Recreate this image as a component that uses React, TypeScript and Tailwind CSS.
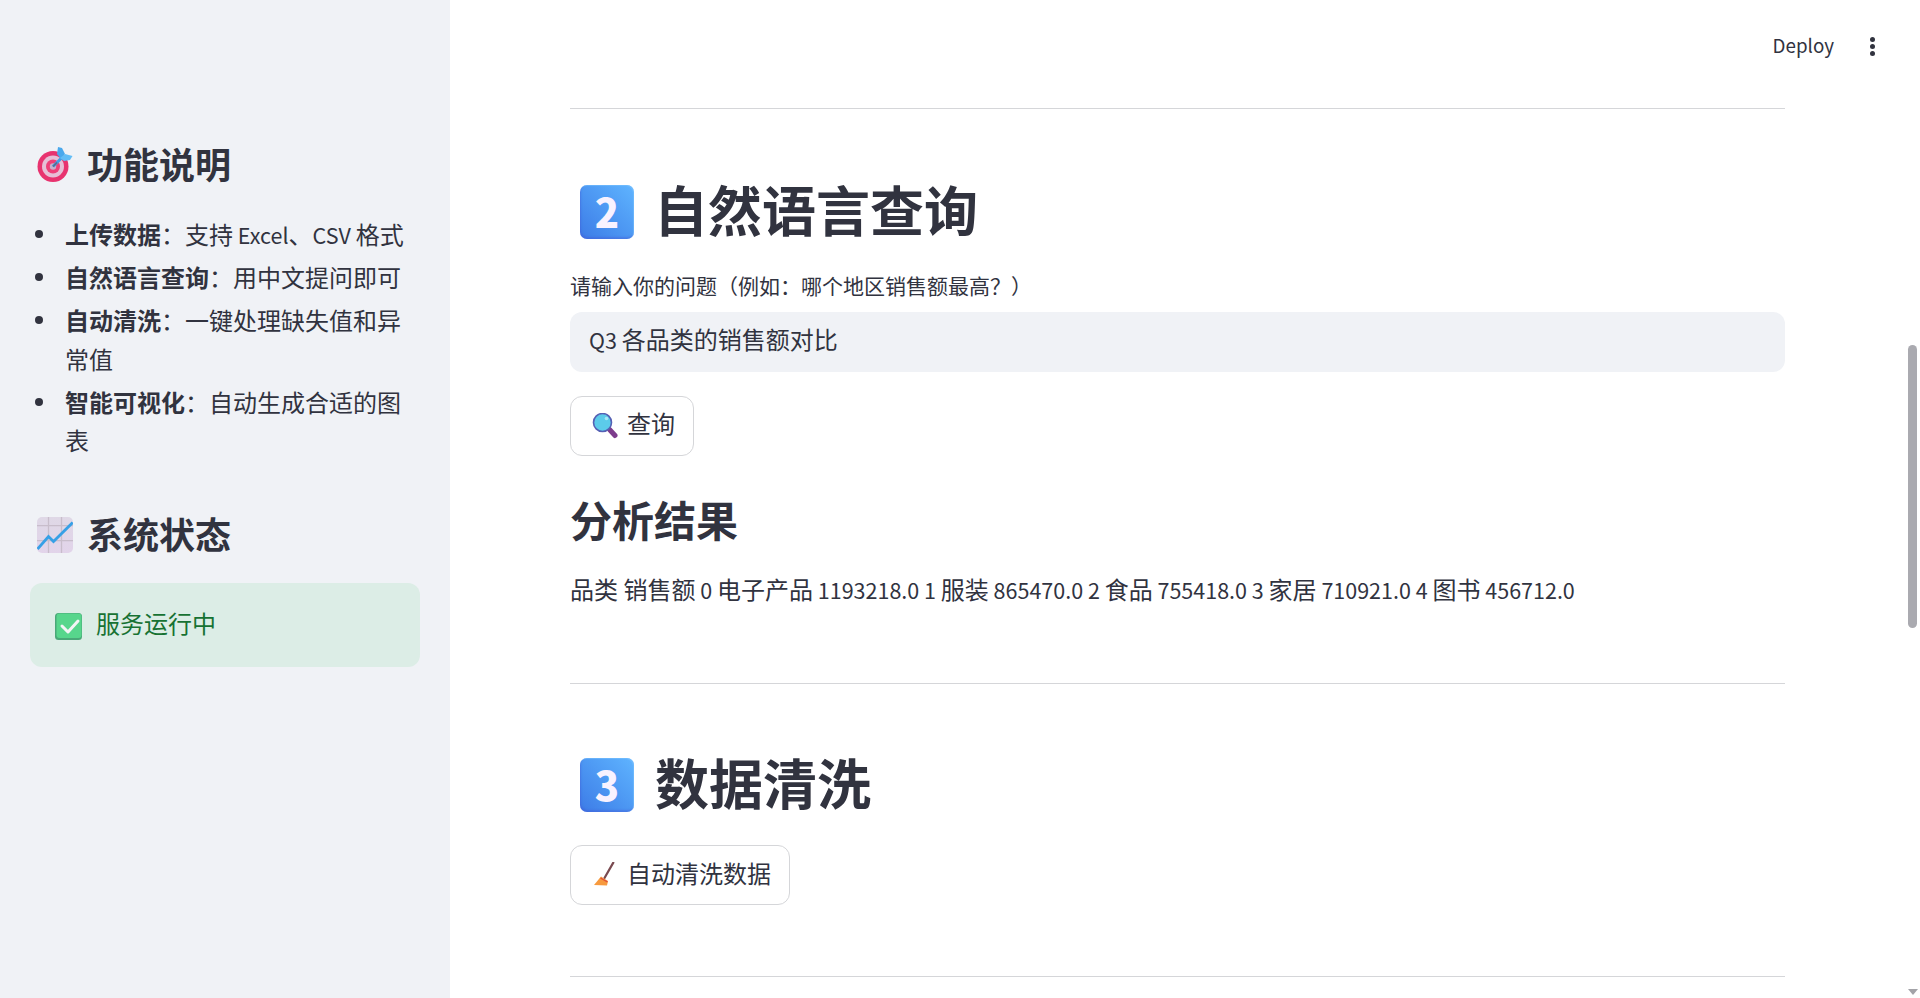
import React from "react";

const FONT = '"Noto Sans CJK SC", "Noto Sans", sans-serif';

// latin glyphs in the CJK font run about 10% larger than the reference's
function L({ children }: { children: React.ReactNode }) {
  return <span className="text-[21.5px] leading-none">{children}</span>;
}

function Keycap({ digit }: { digit: string }) {
  return (
    <span className="flex h-[54px] w-[54px] shrink-0 items-center justify-center rounded-[7px] bg-linear-to-tr from-[#3d7be6] to-[#5fb4ff] shadow-[inset_-1px_1px_1px_rgba(130,200,255,0.5),inset_1px_-2px_2px_rgba(70,80,210,0.35)]">
      <span className="-mt-[2px] text-[40px] leading-none font-black text-[#f8f2ff]">{digit}</span>
    </span>
  );
}

function TargetIcon() {
  return (
    <svg viewBox="0 0 36 36" className="h-9 w-9 shrink-0">
      <circle cx="16" cy="19.5" r="15.5" fill="#e8336f" />
      <circle cx="16" cy="19.5" r="11" fill="#e6bfd6" />
      <circle cx="16" cy="19.5" r="7" fill="#ee3f78" />
      <circle cx="16" cy="19.5" r="3.2" fill="#c9aeca" />
      <path d="M16 19.5 L26 9.5" stroke="#3f9fe6" strokeWidth="3" />
      <path d="M16 19.5 L20 15.5" stroke="#5b6a86" strokeWidth="1.6" />
      <path d="M21 0 L25 1 L28 7 L24 12 L20 7 Z" fill="#4aa8ec" />
      <path d="M28 7 L35.5 9 L33 13 L27 14 L23 11 Z" fill="#62bdf6" />
    </svg>
  );
}

function ChartIcon() {
  return (
    <svg viewBox="0 0 36 36" className="h-9 w-9 shrink-0">
      <defs>
        <linearGradient id="chart-bg" x1="0" y1="0" x2="0" y2="1">
          <stop offset="0" stopColor="#dfd8e6" />
          <stop offset="1" stopColor="#e2d4ea" />
        </linearGradient>
      </defs>
      <rect x="0" y="0" width="36" height="36" rx="5" fill="url(#chart-bg)" />
      <path d="M11.5 0 V36 M24.5 0 V36 M0 8.7 H36 M0 23.7 H36" stroke="#c8bdcb" strokeWidth="1.3" />
      <path d="M0.5 32 L11.5 19.5 L16.5 24.5 L35.7 5.5" fill="none" stroke="#37a0e6" strokeWidth="2.8" />
    </svg>
  );
}

function CheckIcon() {
  return (
    <svg viewBox="0 0 27 27" className="mt-[3px] h-[27px] w-[27px] shrink-0">
      <rect x="0" y="0" width="27" height="27" rx="3.5" fill="#4aa878" />
      <rect x="1.5" y="0.5" width="25" height="24.5" rx="3" fill="#57d68c" />
      <path d="M7 13 L13 19 L23 8" fill="none" stroke="#f4f4f6" strokeWidth="3" strokeLinecap="round" strokeLinejoin="round" />
    </svg>
  );
}

function SearchIcon() {
  return (
    <svg viewBox="0 0 26 26" className="h-[26px] w-[26px] shrink-0">
      <path d="M17.5 16.5 L23 22.5" stroke="#7d3c8c" strokeWidth="5" strokeLinecap="round" />
      <circle cx="10.5" cy="9.5" r="9" fill="#5ccbea" stroke="#5560b4" strokeWidth="1.6" />
      <circle cx="14.5" cy="5.5" r="1.8" fill="#a5e8f6" />
    </svg>
  );
}

function BroomIcon() {
  return (
    <svg viewBox="0 0 26 26" className="h-[26px] w-[26px] shrink-0">
      <path d="M21.3 0.6 L12.5 16" stroke="#7a4a50" strokeWidth="2.2" strokeLinecap="round" />
      <path d="M9 14.5 L16 19 L15 23.5 L2 23 Z" fill="#f79a3e" />
      <path d="M8.5 16 L15.5 20" stroke="#e0503a" strokeWidth="1.4" />
    </svg>
  );
}

function SidebarHeading({ icon, text }: { icon: React.ReactNode; text: string }) {
  return (
    <h3 className="flex h-[54px] items-center gap-[14px] pl-[7px] text-[36px] leading-[54px] font-bold text-[#31333f]">
      {icon}
      <span className="-mt-[5px]">{text}</span>
    </h3>
  );
}

function ActionButton({ icon, label }: { icon: React.ReactNode; label: string }) {
  return (
    <button className="flex h-[60px] items-center gap-[9px] rounded-xl border-[1.5px] border-[#d5d6d9] bg-white pr-[17.5px] pl-[21px] text-[24px] text-[#31333f]">
      {icon}
      <span className="-mt-[5px]">{label}</span>
    </button>
  );
}

const features: { name: string; desc: React.ReactNode }[] = [
  {
    name: "上传数据",
    desc: (
      <>
        支持<L> Excel</L>、<L>CSV </L>格式
      </>
    ),
  },
  { name: "自然语言查询", desc: "用中文提问即可" },
  { name: "自动清洗", desc: "一键处理缺失值和异常值" },
  { name: "智能可视化", desc: "自动生成合适的图表" },
];

export default function App() {
  return (
    <div
      lang="zh-CN"
      className="relative flex h-[998px] overflow-hidden bg-white text-[#31333f]"
      style={{ fontFamily: FONT }}
    >
      <aside className="w-[450px] shrink-0 bg-[#f0f2f6] px-[30px] pt-[138px]">
        <SidebarHeading icon={<TargetIcon />} text="功能说明" />
        <ul className="mt-[23px] pl-[5px] text-[24px] leading-[38.4px]">
          {features.map((f) => (
            <li key={f.name} className="mb-[4.8px] flex">
              <span className="mt-[15px] mr-[22px] h-2 w-2 shrink-0 rounded-full bg-[#31333f]" />
              <span>
                <strong className="font-bold">{f.name}</strong>：{f.desc}
              </span>
            </li>
          ))}
        </ul>
        <div className="mt-[48.5px]">
          <SidebarHeading icon={<ChartIcon />} text="系统状态" />
        </div>
        <div className="mt-[21px] flex h-[84px] items-center gap-[14px] rounded-xl bg-[#dcede6] pl-[25px] text-[24px] text-[#177233]">
          <CheckIcon />
          <span className="-mt-[5px]">服务运行中</span>
        </div>
      </aside>

      <main className="min-w-0 flex-1 pt-[108px] pr-[135px] pl-[120px]">
        <hr className="border-t-[1.5px] border-[#d5d6d9]" />

        <h2 className="mt-[74px] flex h-[58px] items-center gap-[20px] pl-[10px] text-[54px] leading-[58px] font-bold">
          <Keycap digit="2" />
          <span className="-mt-[7px]">自然语言查询</span>
        </h2>
        <label className="mt-[28px] block text-[21px] leading-[32px]">
          请输入你的问题（例如：哪个地区销售额最高？）
        </label>
        <div className="mt-[10.5px] flex h-[60px] items-center rounded-xl bg-[#f0f2f6] pb-[5px] pl-[19px] text-[24px]">
          <span>
            <L>Q3 </L>各品类的销售额对比
          </span>
        </div>
        <div className="mt-[24px]">
          <ActionButton icon={<SearchIcon />} label="查询" />
        </div>
        <h3 className="mt-[34px] text-[42px] leading-[58px] font-bold">分析结果</h3>
        <p className="mt-[22.5px] text-[24px] leading-[38px]">
          品类 销售额<L> 0 </L>电子产品<L> 1193218.0 1 </L>服装<L> 865470.0 2 </L>食品<L> 755418.0 3 </L>家居<L> 710921.0 4 </L>图书<L> 456712.0</L>
        </p>
        <hr className="mt-[75px] border-t-[1.5px] border-[#d5d6d9]" />

        <h2 className="mt-[72px] flex h-[58px] items-center gap-[21px] pl-[10px] text-[54px] leading-[58px] font-bold">
          <Keycap digit="3" />
          <span className="-mt-[7px]">数据清洗</span>
        </h2>
        <div className="mt-[31px]">
          <ActionButton icon={<BroomIcon />} label="自动清洗数据" />
        </div>
        <hr className="mt-[71px] border-t-[1.5px] border-[#d5d6d9]" />
      </main>

      {/* header actions and scrollbar float over the page */}
      <div className="absolute top-[23px] right-[45px] flex h-[46px] items-center gap-[36px]">
        <span className="-mt-[3px] text-[18.8px] leading-[46px]">Deploy</span>
        <span className="flex flex-col gap-[2px]">
          <span className="h-[5px] w-[5px] rounded-full bg-[#31333f]" />
          <span className="h-[5px] w-[5px] rounded-full bg-[#31333f]" />
          <span className="h-[5px] w-[5px] rounded-full bg-[#31333f]" />
        </span>
      </div>
      <div className="absolute top-[345px] right-[3px] h-[283px] w-[9px] rounded-full bg-[#aaaab0]" />
      <svg viewBox="0 0 10 6" className="absolute right-[2px] bottom-[3px] h-[6px] w-[10px]">
        <path d="M0 0 H10 L5 6 Z" fill="#a3a3a8" />
      </svg>
    </div>
  );
}
